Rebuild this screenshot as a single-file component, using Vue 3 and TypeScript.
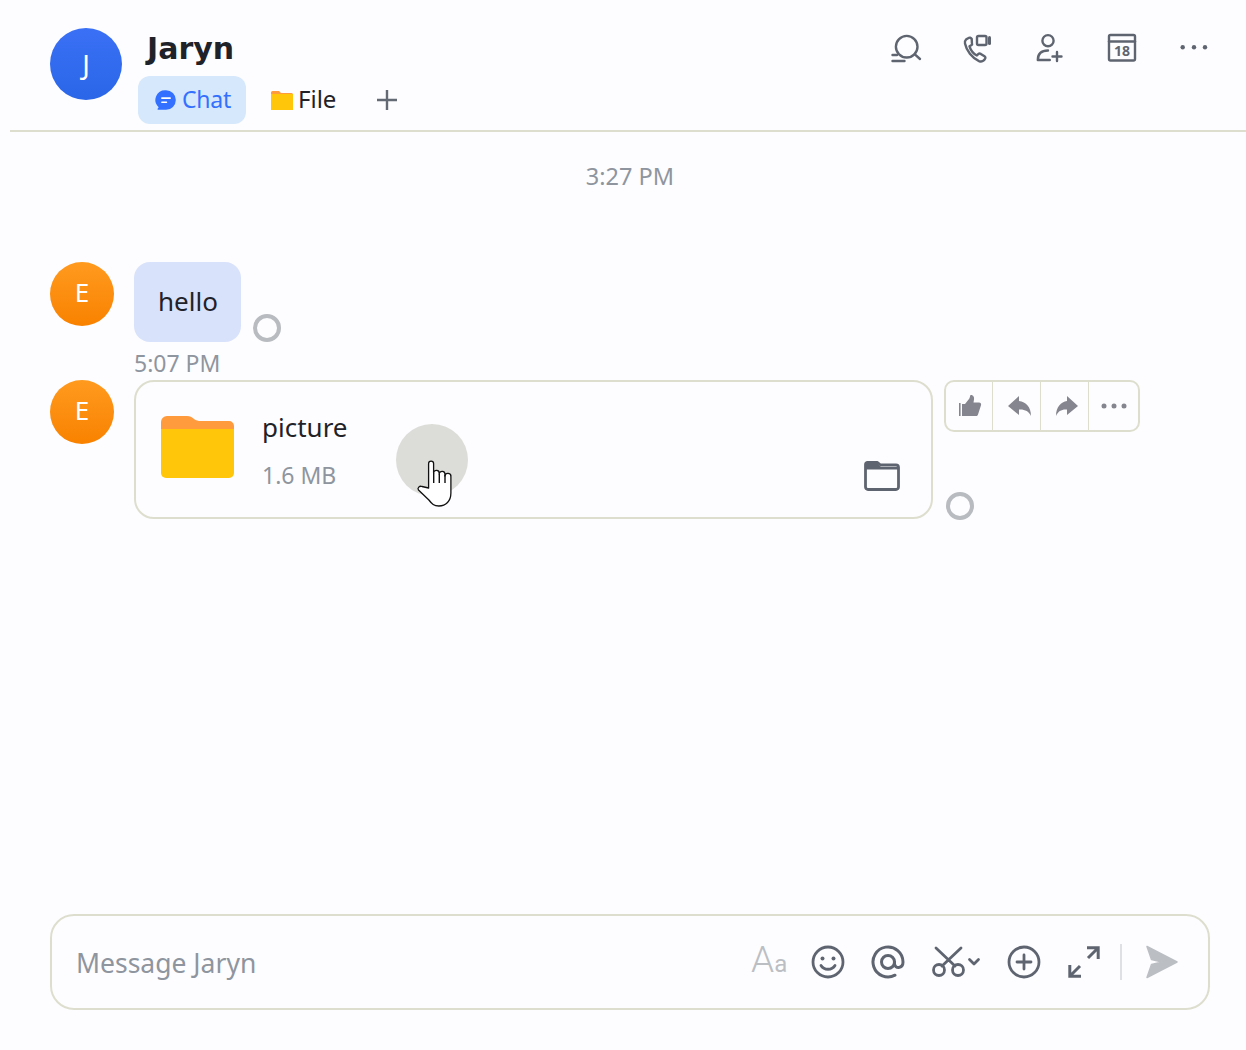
<template>
  <div class="page">
    <header class="chat-header">
      <div class="avatar avatar-large">J</div>
      <div class="header-main">
        <h1 class="title">Jaryn</h1>
        <nav class="tabs">
          <div class="tab tab-active">
            <svg class="tab-icon" width="22" height="24" viewBox="0 0 24 24">
              <path d="M12 1.300a10.700 10.700 0 1 1 0 21.400H3.600c-.8 0-1-.7-.6-1.300l1-1.500A10.700 10.700 0 0 1 12 1.300z" fill="#3370ff" />
              <path d="M7.500 10h9M7.500 14.500h5" stroke="#fff" stroke-width="1.800" stroke-linecap="round" />
            </svg>
            <span>Chat</span>
          </div>
          <div class="tab tab-file">
            <svg class="tab-icon" width="22" height="19" viewBox="0 0 22 19">
              <path d="M0 1.500A1.500 1.500 0 0 1 1.500 0H8l2 2h10.500A1.500 1.500 0 0 1 22 3.500V6H0z" fill="#ff9a3d" />
              <rect y="3" width="22" height="16" fill="#ffc60a" />
            </svg>
            <span>File</span>
          </div>
          <svg class="tab-add" width="20" height="20" viewBox="0 0 20 20">
            <path d="M10 0v20M0 10h20" stroke="#646a73" stroke-width="2.400" />
          </svg>
        </nav>
      </div>
      <div class="header-actions">
        <svg v-for="n in 5" :key="n" class="header-icon" width="32" height="32" viewBox="0 0 32 32" fill="none" stroke="#5f6570" stroke-width="2.400" stroke-linecap="round" stroke-linejoin="round">
          <template v-if="n === 1">
            <circle cx="16.700" cy="14.700" r="10.800" />
            <path d="M24.600 22.200l5.400 4.800M2.500 23h4.500M2.500 29h12" />
          </template>
          <template v-else-if="n === 2">
            <path d="M3 6.600c-1 1-1.400 2.400-1 4 1.400 7 7 14.500 14 17.500 1.800.7 3.500.5 4.700-.7l1.200-1.300c.8-1 .6-2.200-.4-2.900l-3.700-2.300c-.9-.5-1.900-.4-2.600.3l-1.300 1.300c-3.400-1.800-6.200-5.400-7.400-9.200l1.700-1c.9-.7 1.100-1.700.7-2.700L8.700 5.900C8 4.700 6.500 4.300 5.500 5z" transform="translate(1 1)" />
            <rect x="15" y="4" width="9.500" height="9" rx="1.500" />
            <path d="M27.500 5.500v6" stroke-width="3" />
          </template>
          <template v-else-if="n === 3">
            <circle cx="14" cy="8.700" r="5.600" />
            <path d="M3.800 28c0-6.500 4-9.500 10.200-9.500M3.800 28h12M18.500 24.500h9M23 20v9" />
          </template>
          <template v-else-if="n === 4">
            <rect x="3" y="3" width="26" height="25.500" rx="1.500" />
            <path d="M3 9.500h26" />
            <text x="16" y="24" class="calendar-day">18</text>
          </template>
          <template v-else>
            <circle cx="4.700" cy="15.300" r="2.200" fill="#5f6570" stroke="none" />
            <circle cx="16" cy="15.300" r="2.200" fill="#5f6570" stroke="none" />
            <circle cx="27" cy="15.300" r="2.200" fill="#5f6570" stroke="none" />
          </template>
        </svg>
      </div>
    </header>

    <main class="messages">
      <div class="time-divider">3:27 PM</div>

      <div class="message message-first">
        <div class="avatar avatar-small">E</div>
        <div class="message-body">
          <div class="bubble-row">
            <div class="bubble">hello</div>
            <span class="status-ring"></span>
          </div>
          <div class="message-time">5:07 PM</div>
        </div>
      </div>

      <div class="message">
        <div class="avatar avatar-small">E</div>
        <div class="file-row">
          <div class="file-card">
            <svg class="file-icon" width="74" height="64" viewBox="0 0 74 64">
              <path d="M0 7a6 6 0 0 1 6-6h20c3 0 5 1 7 3 2 1.500 4 2 7 2h28a5 5 0 0 1 5 5v12H0z" fill="#ff9a3d" />
              <path d="M0 14h73v44a5 5 0 0 1-5 5H5a5 5 0 0 1-5-5z" fill="#ffc60a" />
            </svg>
            <div class="file-info">
              <div class="file-name">picture</div>
              <div class="file-size">1.6 MB</div>
            </div>
            <svg class="open-folder" width="36" height="30" viewBox="0 0 36 30" fill="none">
              <path d="M1.500 3.500A2 2 0 0 1 3.500 1.500h10l3 2.500h15.500a2.500 2.500 0 0 1 2.500 2.500V26a2.500 2.500 0 0 1-2.500 2.500H4A2.500 2.500 0 0 1 1.500 26z" stroke="#5f6570" stroke-width="2.800" stroke-linejoin="round" />
              <path d="M2 3h12l3 3h18v2.500H2z" fill="#5f6570" />
            </svg>
          </div>
          <div class="file-side">
            <div class="toolbar">
              <button class="tool">
                <svg width="24" height="24" viewBox="0 0 24 24" fill="#85858f" overflow="visible">
                  <path d="M2 9h1.600v13H2zM5 10h3l4-5c1-1.500 1-3 1.500-4 2.500-.5 4 2 3.500 4.500l-.5 3h5.500c1.500 0 2.500 1.300 2 2.800L21 20.500c-.4 1-1 1.500-2 1.500H5z" />
                </svg>
              </button>
              <button class="tool">
                <svg width="24" height="24" viewBox="0 0 24 24" fill="#85858f" overflow="visible">
                  <path d="M14 2L3 12l11 9v-5.500c5-.5 10 1.500 12 6.500 0-9-5-14-12-15z" />
                </svg>
              </button>
              <button class="tool">
                <svg width="24" height="24" viewBox="0 0 24 24" fill="#85858f" overflow="visible">
                  <path d="M14 2l11 10-11 9v-5.500C9 15 5 17 3 22c0-9 5-14 11-15z" />
                </svg>
              </button>
              <button class="tool">
                <svg width="26" height="8" viewBox="0 0 26 8" fill="#85858f">
                  <circle cx="3" cy="4" r="2.500" />
                  <circle cx="13" cy="4" r="2.500" />
                  <circle cx="23" cy="4" r="2.500" />
                </svg>
              </button>
            </div>
            <span class="status-ring"></span>
          </div>
        </div>
      </div>

      <span class="click-ripple"></span>
      <svg class="hand-cursor" width="40" height="50" viewBox="0 0 40 50">
        <path d="M12.600 29V4.600a2.500 2.500 0 0 1 5 0V14a2.800 2.800 0 0 1 5.600.5V15a2.800 2.800 0 0 1 5.700.5V17a3 3 0 0 1 6 .8V34c0 8-5 13-12 13-5 0-7-2-10-6L2.500 31c-1.500-2 1-4.500 3.500-3.500z" fill="#fff" stroke="#111" stroke-width="1.300" stroke-linejoin="round" />
        <path d="M17.700 14v10M23.300 15v9M29 16v8" stroke="#111" stroke-width="1.400" />
      </svg>
    </main>

    <footer class="composer">
      <div class="placeholder">Message Jaryn</div>
      <div class="composer-tools">
        <div class="format-icon"><span>A</span><span class="format-small">a</span></div>
        <svg class="tool-icon" width="34" height="34" viewBox="0 0 34 34" fill="none" stroke="#5f6570" stroke-width="2.800" stroke-linecap="round">
          <circle cx="17" cy="17" r="15" />
          <circle cx="11.500" cy="13.500" r="2" fill="#5f6570" stroke="none" />
          <circle cx="22.500" cy="13.500" r="2" fill="#5f6570" stroke="none" />
          <path d="M10 20.500c3 5 11 5 14 0" />
        </svg>
        <svg class="tool-icon" width="34" height="34" viewBox="0 0 34 34" fill="none" stroke="#5f6570" stroke-width="3" stroke-linecap="round">
          <circle cx="17" cy="17" r="6.500" />
          <path d="M23.500 17v1.500c0 5.500 8.500 5.500 8.500-1.500a15 15 0 1 0-8 13.200" />
        </svg>
        <svg class="scissors" width="50" height="34" viewBox="0 0 50 34" fill="none" stroke="#5f6570" stroke-width="2.800" stroke-linecap="round" stroke-linejoin="round">
          <circle cx="8" cy="25" r="5.500" />
          <circle cx="27" cy="25" r="5.500" />
          <path d="M5 3l19 18M30 3L11 21M38.500 14.500l4.500 4.500 4.500-4.500" />
        </svg>
        <svg class="tool-icon" width="34" height="34" viewBox="0 0 34 34" fill="none" stroke="#5f6570" stroke-width="2.800" stroke-linecap="round">
          <circle cx="17" cy="17" r="15" />
          <path d="M17 10v14M10 17h14" />
        </svg>
        <svg class="tool-icon" width="34" height="34" viewBox="0 0 34 34" fill="none" stroke="#5f6570" stroke-width="3">
          <path d="M20 2.800h11.200V14M31 3L21 13M2.800 20v11.200H14M3 31l10-10" />
        </svg>
        <span class="tool-divider"></span>
        <svg class="send-icon" width="32" height="34" viewBox="0 0 32 34">
          <path d="M1 1.500L31 17 1 32.500l4.500-13L16 17 5.500 14.500z" fill="#bbbfc4" stroke="#bbbfc4" stroke-width="1.500" stroke-linejoin="round" />
        </svg>
      </div>
    </footer>
  </div>
</template>

<script setup lang="ts">
</script>

<style>
body {
  background: #fdfdff;
}
</style>

<style scoped>
.page {
  position: relative;
  width: 1246px;
  height: 1050px;
  display: flex;
  flex-direction: column;
  overflow: hidden;
  font-family: "Noto Sans", "Liberation Sans", sans-serif;
  color: #1f2329;
}

.chat-header {
  display: flex;
  height: 132px;
  box-sizing: border-box;
  margin-left: 10px;
  padding: 28px 36px 0 40px;
  border-bottom: 2px solid #dedecf;
}

.avatar {
  flex: none;
  border-radius: 50%;
  color: #fff;
  display: flex;
  align-items: center;
  justify-content: center;
}

.avatar-large {
  width: 72px;
  height: 72px;
  font-size: 28px;
  background: linear-gradient(#3a70f5, #2a66e8);
}

.avatar-small {
  width: 64px;
  height: 64px;
  font-size: 26px;
  padding-bottom: 4px;
  box-sizing: border-box;
  background: linear-gradient(#ff9a1f, #f98200);
}

.header-main {
  margin-left: 16px;
  flex: 1;
}

.title {
  margin: 0 0 0 9px;
  font-family: "DejaVu Sans", sans-serif;
  font-size: 30px;
  font-weight: 700;
  line-height: 42px;
  height: 48px;
}

.tabs {
  display: flex;
  align-items: center;
  height: 48px;
}

.tab {
  display: flex;
  align-items: center;
  height: 48px;
  font-size: 24px;
  line-height: 46px;
}

.tab span {
  margin-top: -2px;
}

.tab-active {
  width: 108px;
  box-sizing: border-box;
  padding-left: 17px;
  gap: 5px;
  border-radius: 12px;
  background: #d6e8fb;
  color: #3370ff;
  font-size: 23px;
  letter-spacing: -0.2px;
}

.tab-file {
  margin-left: 25px;
  gap: 5px;
}

.tab-add {
  margin-left: 41px;
}

.header-actions {
  display: flex;
  gap: 40px;
  height: 40px;
  padding-top: 4px;
}

.calendar-day {
  font-family: "Noto Sans", sans-serif;
  font-size: 14px;
  font-weight: 700;
  text-anchor: middle;
  fill: #5f6570;
  stroke: none;
}

.messages {
  position: relative;
  flex: 1;
  padding-left: 50px;
}

.time-divider {
  margin: 28px 0 0 526px;
  width: 108px;
  text-align: center;
  font-size: 23.500px;
  line-height: 32px;
  color: #8f959e;
}

.message {
  display: flex;
  gap: 20px;
}

.message-first {
  margin-top: 70px;
}

.message-body {
  display: flex;
  flex-direction: column;
}

.bubble-row {
  display: flex;
  align-items: flex-end;
  gap: 12px;
}

.bubble {
  width: 107px;
  height: 80px;
  box-sizing: border-box;
  padding: 0 0 3px 24px;
  display: flex;
  align-items: center;
  border-radius: 16px;
  background: #d8e2fb;
  font-size: 26px;
}

.status-ring {
  display: block;
  width: 28px;
  height: 28px;
  box-sizing: border-box;
  border: 4px solid #b8bbbf;
  border-radius: 50%;
}

.message-time {
  height: 38px;
  font-size: 23px;
  line-height: 42px;
  color: #8f959e;
}

.file-row {
  display: flex;
  gap: 11px;
}

.file-card {
  position: relative;
  width: 799px;
  height: 139px;
  box-sizing: border-box;
  padding: 33px 0 0 25px;
  display: flex;
  gap: 27px;
  border: 2px solid #dedecf;
  border-radius: 20px;
}

.file-info {
  margin-top: -8px;
}

.file-name {
  font-size: 26px;
  line-height: 40px;
}

.file-size {
  margin-top: 12px;
  font-size: 23px;
  line-height: 32px;
  color: #8f959e;
}

.open-folder {
  position: absolute;
  right: 31px;
  bottom: 26px;
}

.file-side {
  display: flex;
  flex-direction: column;
  justify-content: space-between;
  align-items: flex-start;
  height: 140px;
  padding-left: 2px;
}

.toolbar {
  display: flex;
  width: 196px;
  height: 52px;
  box-sizing: border-box;
  margin-left: -2px;
  border: 2px solid #dedecf;
  border-radius: 10px;
}

.tool {
  flex: none;
  width: 48px;
  padding: 0;
  border: 0;
  border-right: 1px solid #dedecf;
  background: none;
  display: flex;
  align-items: center;
  justify-content: center;
}

.tool:first-child {
  width: 47px;
}

.tool:last-child {
  flex: 1;
  border-right: 0;
}

.click-ripple {
  position: absolute;
  left: 396px;
  top: 292px;
  width: 72px;
  height: 72px;
  border-radius: 50%;
  background: #dcdcd8;
}

.hand-cursor {
  position: absolute;
  left: 416px;
  top: 327px;
}

.composer {
  display: flex;
  align-items: center;
  justify-content: space-between;
  height: 96px;
  box-sizing: border-box;
  margin: 0 36px 40px 50px;
  padding: 0 30px 0 24px;
  border: 2px solid #dedecf;
  border-radius: 24px;
}

.placeholder {
  margin-top: 2px;
  font-size: 26.500px;
  color: #8f959e;
}

.composer-tools {
  display: flex;
  align-items: center;
}

.format-icon {
  display: flex;
  align-items: baseline;
  width: 36px;
  margin-right: 24px;
  font-family: Roboto, sans-serif;
  font-weight: 300;
  font-size: 37px;
  line-height: 34px;
  color: #bbbfc4;
}

.format-small {
  font-size: 24px;
  font-weight: 400;
}

.tool-icon {
  margin-right: 26px;
}

.scissors {
  margin: 0 26px 0 0;
}

.tool-divider {
  width: 2px;
  height: 36px;
  margin: 0 24px 0 -7px;
  background: #dee0e3;
}
</style>
